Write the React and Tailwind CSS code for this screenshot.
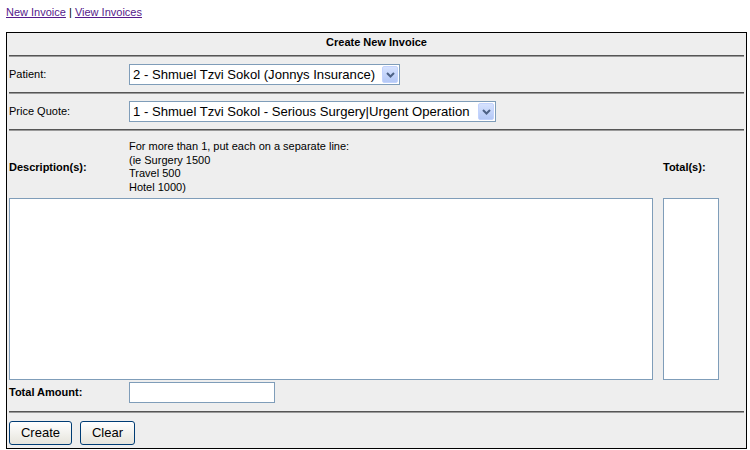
import React from "react";

function FakeSelect({ value, width }) {
  return (
    <div
      className="flex h-[21px] items-center border border-[#7f9db9] bg-white pl-[3px] pr-[1px]"
      style={{ width }}
    >
      <span className="flex-1 overflow-hidden whitespace-nowrap pt-[1px] text-[13.1px] leading-none text-black">{value}</span>
      <span className="ml-[2px] flex h-[17px] w-[16px] shrink-0 items-center justify-center rounded-[2px] border border-[#c3d3fd] bg-gradient-to-b from-[#d6e2fe] to-[#b4c8f6]">
        <svg width="9" height="6" viewBox="0 0 9 6">
          <path d="M1 1 L4.5 4.5 L8 1" fill="none" stroke="#4d6185" strokeWidth="2" />
        </svg>
      </span>
    </div>
  );
}

function Rule() {
  return <div className="mx-[2px] h-[2px] border-t border-[#555555] bg-[#9a9a9a]" />;
}

function XpButton({ children, width }) {
  return (
    <button
      className="h-[24px] rounded-[3px] border border-[#003c74] bg-gradient-to-b from-[#ffffff] to-[#e6e4dc] text-[13px] text-black"
      style={{ width }}
    >
      {children}
    </button>
  );
}

export default function App() {
  return (
    <div className="min-h-[450px] bg-white pl-[6px] pt-[5px] font-['Liberation_Sans',Arial,sans-serif] text-[11px] text-black">
      <div className="mb-[13px] h-[14px] leading-[14px]">
        <a href="#" className="text-[#551a8b] underline">New Invoice</a>
        {" | "}
        <a href="#" className="text-[#551a8b] underline">View Invoices</a>
      </div>

      <div className="h-[417px] w-[741px] border border-black bg-[#eeeeee]">
        <div className="flex h-[18px] items-center justify-center font-bold">Create New Invoice</div>
        <div className="h-[4px]" />
        <Rule />

        <div className="flex h-[35px] items-center pl-[2px]">
          <div className="w-[120px]">Patient:</div>
          <FakeSelect value="2 - Shmuel Tzvi Sokol (Jonnys Insurance)" width={271} />
        </div>
        <Rule />

        <div className="flex h-[35px] items-center pl-[2px]">
          <div className="w-[120px]">Price Quote:</div>
          <FakeSelect value="1 - Shmuel Tzvi Sokol - Serious Surgery|Urgent Operation" width={367} />
        </div>
        <Rule />

        <div className="flex items-center pl-[2px] pt-[9px]">
          <div className="w-[120px] font-bold">Description(s):</div>
          <div className="w-[534px] leading-[13.5px]">
            For more than 1, put each on a separate line:
            <br />
            (ie Surgery 1500
            <br />
            Travel 500
            <br />
            Hotel 1000)
          </div>
          <div className="font-bold">Total(s):</div>
        </div>

        <div className="mt-[4px] flex pl-[2px]">
          <textarea className="h-[182px] w-[644px] resize-none border border-[#7f9db9] bg-white outline-none" />
          <textarea className="ml-[10px] h-[182px] w-[56px] resize-none border border-[#7f9db9] bg-white outline-none" />
        </div>

        <div className="mt-[2px] flex h-[21px] items-center pl-[2px]">
          <div className="w-[120px] font-bold">Total Amount:</div>
          <input className="h-[21px] w-[146px] border border-[#7f9db9] bg-white outline-none" />
        </div>

        <div className="h-[8px]" />
        <Rule />

        <div className="mt-[8px] flex gap-[8px] pl-[2px]">
          <XpButton width={63}>Create</XpButton>
          <XpButton width={55}>Clear</XpButton>
        </div>
      </div>
    </div>
  );
}
